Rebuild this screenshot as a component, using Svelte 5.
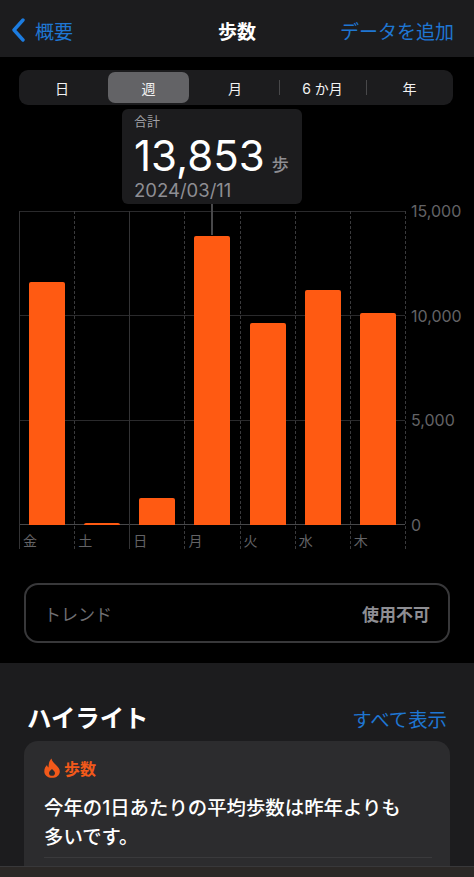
<script>
  const tabs = ['日', '週', '月', '6 か月', '年'];
  const days = [
    { label: '金', height: 243, solid: false },
    { label: '土', height: 2, solid: false },
    { label: '日', height: 27, solid: true },
    { label: '月', height: 289, solid: false },
    { label: '火', height: 202, solid: false },
    { label: '水', height: 235, solid: false },
    { label: '木', height: 212, solid: false }
  ];
  const ticks = ['15,000', '10,000', '5,000', '0'];
</script>

<div class="screen">
  <header class="nav">
    <div class="back">
      <svg width="14" height="24" viewBox="0 0 14 24" fill="none">
        <path d="M12 2 L3 12 L12 22" stroke="#1c7ce0" stroke-width="3.4" stroke-linecap="round" stroke-linejoin="round" />
      </svg>
      <span>概要</span>
    </div>
    <div class="title">歩数</div>
    <div class="add">データを追加</div>
  </header>

  <div class="segments">
    {#each tabs as tab, i}
      <div class="segment" class:active={i === 1} class:sep={i === 3 || i === 4}>{tab}</div>
    {/each}
  </div>

  <section class="chart">
    <div class="tooltip">
      <div class="tip-label">合計</div>
      <div class="tip-value">13,853<span>歩</span></div>
      <div class="tip-date">2024/03/11</div>
    </div>

    <div class="plot">
      <div class="gridlines">
        <i></i><i></i><i></i><i></i>
      </div>
      {#each days as day, i}
        <div class="col" class:solid={day.solid} class:first={i === 0}>
          <div class="bar-area">
            {#if i === 3}<div class="pointer"></div>{/if}
            <div class="bar" style="height: {day.height}px"></div>
          </div>
          <div class="day">{day.label}</div>
        </div>
      {/each}
    </div>
    <div class="axis">
      {#each ticks as tick}
        <div class="tick">{tick}</div>
      {/each}
    </div>
  </section>

  <div class="trend">
    <span>トレンド</span>
    <strong>使用不可</strong>
  </div>

  <section class="lower">
    <div class="lower-head">
      <h2>ハイライト</h2>
      <span class="all">すべて表示</span>
    </div>
    <div class="card">
      <div class="card-label">
        <svg width="16" height="20" viewBox="0 0 16 20">
          <path fill-rule="evenodd" fill="#f2591a" d="M7.5 0.5 C8 3.5 10 5 12 7 C14.5 9.5 15.8 11 15.8 13.4 C15.8 17.2 12.4 19.8 8 19.8 C3.6 19.8 0.3 17.2 0.3 13.2 C0.3 10.4 1.6 8.4 3 7 C3.2 8.2 3.7 9 4.6 9.4 C4.4 6 5.2 3 7.5 0.5 Z M8 11 C6.4 12.4 5 13.6 5 15.2 C5 16.8 6.3 17.8 8 17.8 C9.7 17.8 11 16.8 11 15.2 C11 13.6 9.4 12.6 8 11 Z" />
        </svg>
        <span>歩数</span>
      </div>
      <p>今年の1日あたりの平均歩数は昨年よりも<br />多いです。</p>
      <div class="rule"></div>
    </div>
  </section>

  <div class="bottom-bar"></div>
</div>

<style>
  :global(body) {
    margin: 0;
    background: #000;
  }

  .screen {
    position: relative;
    width: 474px;
    height: 877px;
    overflow: hidden;
    background: #000;
    font-family: 'Inter', 'Noto Sans CJK JP', sans-serif;
    color: #fff;
  }

  .nav {
    height: 57px;
    background: #1c1c1e;
    display: flex;
    align-items: center;
    justify-content: space-between;
    padding: 3px 20px 0 11px;
    box-sizing: border-box;
    font-size: 19px;
    position: relative;
  }

  .back {
    display: flex;
    align-items: center;
    gap: 10px;
    color: #1f76d2;
  }

  .title {
    position: absolute;
    left: 0;
    right: 0;
    text-align: center;
    font-weight: 700;
    font-size: 19px;
  }

  .add {
    color: #1f76d2;
  }

  .segments {
    margin: 13px 21px 0 19px;
    height: 35px;
    box-sizing: border-box;
    padding: 2px;
    background: #1c1c1e;
    border-radius: 9px;
    display: grid;
    grid-template-columns: 87px 81px 90px 87px 85px;
  }

  .segment {
    display: flex;
    align-items: center;
    justify-content: center;
    font-size: 14px;
    border-radius: 7px;
    position: relative;
    color: #f2f2f2;
  }

  .segment:first-child {
    padding-right: 5px;
  }

  .segment:nth-child(3),
  .segment:last-child {
    padding-left: 2px;
  }

  .segment.active {
    background: #636366;
  }

  .segment.sep::before {
    content: '';
    position: absolute;
    left: 0;
    top: 8px;
    bottom: 8px;
    width: 1px;
    background: #48484a;
  }

  .chart {
    position: relative;
    display: flex;
    margin: 106px 0 0 19px;
  }

  .tooltip {
    position: absolute;
    left: 103px;
    top: -102px;
    width: 180px;
    height: 95px;
    box-sizing: border-box;
    padding: 3px 12px;
    background: #1c1c1e;
    border-radius: 6px;
    z-index: 3;
  }

  .tip-label {
    font-size: 13px;
    line-height: 18px;
    color: #a1a1a6;
  }

  .tip-value {
    font-size: 42px;
    line-height: 48px;
    height: 47px;
    margin-top: 2px;
    font-weight: 400;
    white-space: nowrap;
  }

  .tip-value span {
    font-size: 17px;
    font-weight: 500;
    color: #8e8e93;
    margin-left: 7px;
  }

  .tip-date {
    font-size: 18.5px;
    line-height: 22px;
    color: #8e8e93;
  }

  .plot {
    position: relative;
    width: 386px;
    height: 338px;
    display: flex;
    border-right: 1px dashed #3a3a3c;
  }

  .gridlines {
    position: absolute;
    left: 0;
    right: 0;
    top: 0;
    height: 314px;
    display: flex;
    flex-direction: column;
    justify-content: space-between;
  }

  .gridlines i {
    display: block;
    height: 1px;
    background: #2a2a2c;
  }

  .gridlines i:last-child {
    background: #48484a;
  }

  .col {
    flex: 1;
    display: flex;
    flex-direction: column;
    border-left: 1px dashed #3a3a3c;
    position: relative;
    min-width: 0;
  }

  .col.solid,
  .col.first {
    border-left: 1px solid #333335;
  }

  .bar-area {
    height: 314px;
    flex-shrink: 0;
    display: flex;
    flex-direction: column;
    justify-content: flex-end;
    align-items: center;
    position: relative;
    z-index: 1;
  }

  .pointer {
    position: absolute;
    left: 50%;
    margin-left: -1px;
    top: -8px;
    height: 32px;
    width: 2px;
    background: #48484a;
  }

  .bar {
    width: 36px;
    background: #ff5a12;
    border-radius: 2px 2px 0 0;
  }

  .day {
    font-size: 14px;
    line-height: 20px;
    padding: 6px 0 0 3px;
    color: #636366;
  }

  .axis {
    margin: -10px 0 0 5px;
    height: 334px;
    box-sizing: border-box;
    display: flex;
    flex-direction: column;
    gap: 84.6px;
  }

  .tick {
    font-size: 16px;
    line-height: 20px;
    color: #636366;
  }

  .trend {
    margin: 34px 24px 0;
    height: 60px;
    box-sizing: border-box;
    border: 2px solid #38383a;
    border-radius: 14px;
    display: flex;
    align-items: center;
    justify-content: space-between;
    padding: 0 18px;
    font-size: 17px;
    color: #707074;
  }

  .trend strong {
    font-weight: 700;
    color: #8e8e93;
  }

  .lower {
    margin-top: 20px;
    background: #1c1c1e;
    padding: 35px 24px 0;
    height: 214px;
    box-sizing: border-box;
  }

  .lower-head {
    display: flex;
    align-items: center;
    justify-content: space-between;
    height: 36px;
    padding: 0 3px;
  }

  h2 {
    margin: 0;
    font-size: 24.4px;
    font-weight: 700;
  }

  .all {
    font-size: 19.4px;
    color: #1f76d2;
    margin-top: 4px;
  }

  .card {
    margin-top: 7px;
    background: #2c2c2e;
    border-radius: 14px;
    padding: 15px 18px 0 20px;
    height: 200px;
    box-sizing: border-box;
  }

  .card-label {
    display: flex;
    align-items: center;
    gap: 4px;
    font-size: 16px;
    font-weight: 700;
    color: #f2591a;
    height: 24px;
  }

  .card p {
    margin: 14px 0 0;
    font-size: 19.4px;
    font-weight: 500;
    line-height: 29px;
    white-space: nowrap;
  }

  .rule {
    margin-top: 5px;
    height: 1px;
    background: #3a3a3c;
  }

  .bottom-bar {
    position: absolute;
    left: 0;
    right: 0;
    bottom: 0;
    height: 10px;
    background: #2b2826;
    border-top: 1px solid #38383a;
  }
</style>
